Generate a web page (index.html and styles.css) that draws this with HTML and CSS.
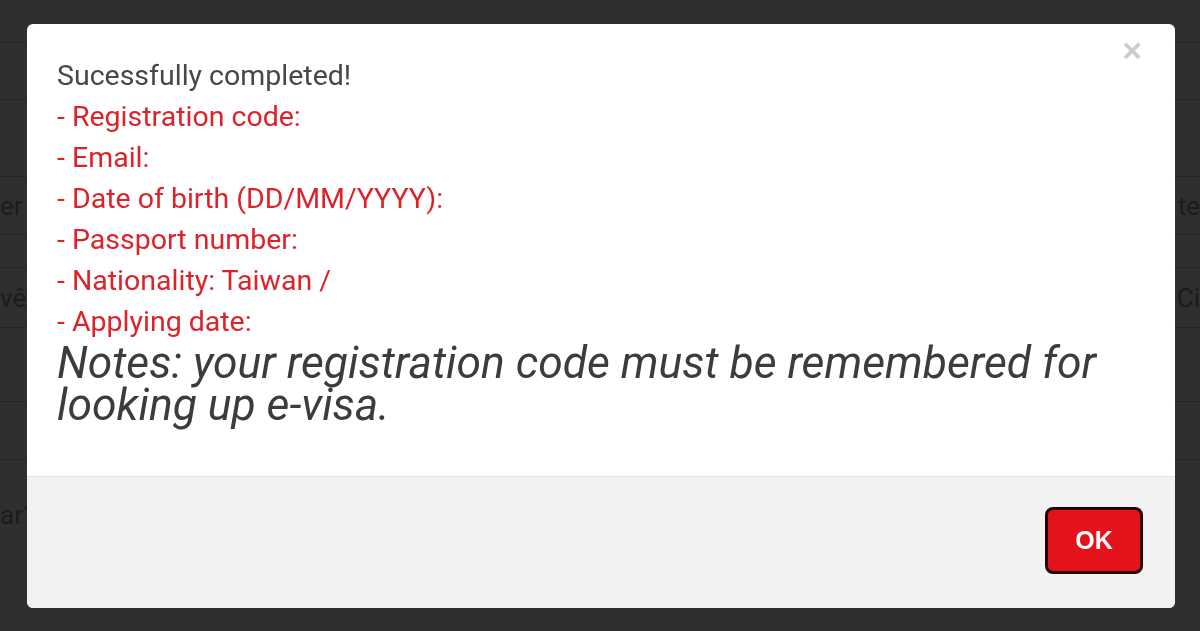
FILE: index.html
```html
<!DOCTYPE html>
<html lang="en">
<head>
    <meta charset="UTF-8">
    <meta name="viewport" content="width=device-width, initial-scale=1.0">
    <title>E-visa registration</title>
    <link rel="stylesheet" href="styles.css">
</head>
<body>
    <div class="page">
        <div class="row r1"></div>
        <div class="row r2"></div>
        <div class="row r3"></div>
        <div class="row r4"><span>er</span><span>te</span></div>
        <div class="row r5"></div>
        <div class="row r6"><span>vê</span><span>Ci</span></div>
        <div class="row r7"></div>
        <div class="row r8"></div>
        <div class="row r9"><span>ar?</span><span></span></div>
    </div>

    <div class="modal">
        <button class="close">&times;</button>
        <div class="modal-body">
            <p class="title">Sucessfully completed!</p>
            <p class="field">- Registration code:</p>
            <p class="field">- Email:</p>
            <p class="field">- Date of birth (DD/MM/YYYY):</p>
            <p class="field">- Passport number:</p>
            <p class="field">- Nationality: Taiwan /</p>
            <p class="field">- Applying date:</p>
            <p class="notes">Notes: your registration code must be remembered for looking up e-visa.</p>
        </div>
        <div class="modal-footer">
            <button class="btn-ok">OK</button>
        </div>
    </div>
</body>
</html>
```

FILE: styles.css
```css
html, body {
    margin: 0;
    padding: 0;
    height: 100%;
    overflow: hidden;
}
body {
    font-family: Roboto, "Liberation Sans", sans-serif;
    background-color: #2f2f2f;
}

/* page behind the dialog */
.page {
    width: 100%;
}
.row {
    display: flex;
    justify-content: space-between;
    align-items: center;
    border-bottom: 1px solid #262626;
    font-size: 26px;
    color: #1c1c1c;
}
.r1 { height: 42px; }
.r2 { height: 56px; }
.r3 { height: 76px; }
.r4 { height: 57px; }
.r5 { height: 32px; }
.r6 { height: 59px; }
.r7 { height: 73px; }
.r8 { height: 57px; }
.r9 { height: 110px; border-bottom: none; }

/* dialog */
.modal {
    position: fixed;
    left: 27px;
    top: 24px;
    width: 1148px;
    height: 584px;
    background: #fff;
    border-radius: 6px;
    display: flex;
    flex-direction: column;
    overflow: hidden;
}
.close {
    position: absolute;
    top: 9px;
    right: 33px;
    border: none;
    background: none;
    padding: 0;
    font-family: "Liberation Sans", Arial, sans-serif;
    font-weight: bold;
    font-size: 34px;
    line-height: 34px;
    color: #cdcdcd;
    cursor: pointer;
}
.modal-body {
    flex: 1;
    padding: 31px 30px 0 30px;
    border-bottom: 1px solid #e2e2e2;
}
.modal-body p {
    margin: 0;
    font-size: 28.5px;
    line-height: 41px;
}
.title {
    color: #474747;
}
.field {
    color: #dd2329;
}
.modal-body .notes {
    font-style: italic;
    font-size: 44.4px;
    line-height: 42px;
    color: #3c3c3c;
    margin-top: 0;
}

.modal-footer {
    height: 131px;
    background: #f2f2f2;
    display: flex;
    justify-content: flex-end;
    align-items: flex-start;
    padding: 30px 32px 0 0;
    box-sizing: border-box;
}
.btn-ok {
    width: 98px;
    height: 67px;
    background: #e3121b;
    border: 3px solid #250303;
    border-radius: 8px;
    color: #fff;
    font-family: "Liberation Sans", Arial, sans-serif;
    font-weight: bold;
    font-size: 25px;
    cursor: pointer;
}
```
